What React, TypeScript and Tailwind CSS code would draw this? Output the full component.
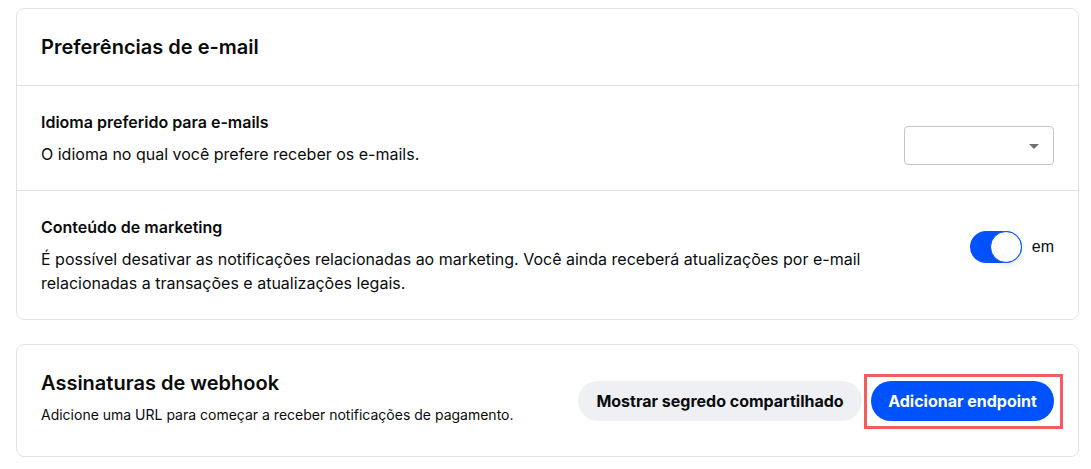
import { useState } from "react";

const font = { fontFamily: "Inter, 'Noto Sans', sans-serif" };

function Select() {
  return (
    <div className="relative mt-4 h-[39px] w-[150px] shrink-0 rounded border border-[#c4c4c4] bg-white">
      <svg
        width="10"
        height="5"
        viewBox="0 0 10 5"
        className="absolute top-[17px] right-[14px]"
      >
        <path d="M0 0h10L5 5z" fill="#707070" />
      </svg>
    </div>
  );
}

function Toggle() {
  const [on, setOn] = useState(true);
  return (
    <div className="mt-4 flex shrink-0 items-center gap-[10px]">
      <button
        role="switch"
        aria-checked={on}
        onClick={() => setOn((v) => !v)}
        className={`flex h-8 w-[52px] items-center rounded-full ${on ? "justify-end bg-[#0052ff]" : "justify-start bg-[#d5d9df]"}`}
      >
        <span className="h-8 w-8 rounded-full border border-[#0052ff] bg-white shadow-[1px_3px_6px_rgba(0,0,0,0.08)]" />
      </button>
      <span
        className="text-base text-[#0a0b0d]"
        style={{ fontFamily: "'Liberation Sans', Arial, sans-serif" }}
      >
        em
      </span>
    </div>
  );
}

export default function App() {
  return (
    <div className="bg-white pt-2 pl-4 text-[#0a0b0d]" style={font}>
      <section className="w-[1063px] rounded-lg border border-[#e0e2e6]">
        <header className="border-b border-[#e0e2e6] px-6 py-6">
          <h2 className="text-xl leading-7 font-semibold">
            Preferências de e-mail
          </h2>
        </header>
        <div className="flex items-start justify-between border-b border-[#e0e2e6] px-6 py-6">
          <div>
            <h3 className="text-base leading-6 font-semibold">
              Idioma preferido para e-mails
            </h3>
            <p className="mt-2 text-base leading-6">
              O idioma no qual você prefere receber os e-mails.
            </p>
          </div>
          <Select />
        </div>
        <div className="flex items-start justify-between px-6 py-6">
          <div className="max-w-[840px]">
            <h3 className="text-base leading-6 font-semibold">
              Conteúdo de marketing
            </h3>
            <p className="mt-2 text-base leading-6">
              É possível desativar as notificações relacionadas ao marketing.
              Você ainda receberá atualizações por e-mail relacionadas a
              transações e atualizações legais.
            </p>
          </div>
          <Toggle />
        </div>
      </section>

      <section className="mt-6 flex w-[1063px] items-center justify-between rounded-lg border border-[#e0e2e6] px-6">
        <div className="pt-6 pb-[31px]">
          <h2 className="text-xl leading-7 font-semibold">
            Assinaturas de webhook
          </h2>
          <p className="mt-2 text-sm leading-5">
            Adicione uma URL para começar a receber notificações de pagamento.
          </p>
        </div>
        <div className="flex items-center gap-[9px]">
          <button className="h-10 w-[284px] rounded-full bg-[#eef0f3] text-base font-bold">
            Mostrar segredo compartilhado
          </button>
          <div className="relative">
            <button className="h-10 w-[183px] rounded-full bg-[#0052ff] text-base font-bold text-white">
              Adicionar endpoint
            </button>
            <span className="pointer-events-none absolute -top-[7px] -right-[9px] -bottom-[8px] -left-[7px] border-[3px] border-[#f25e5e]" />
          </div>
        </div>
      </section>
    </div>
  );
}
